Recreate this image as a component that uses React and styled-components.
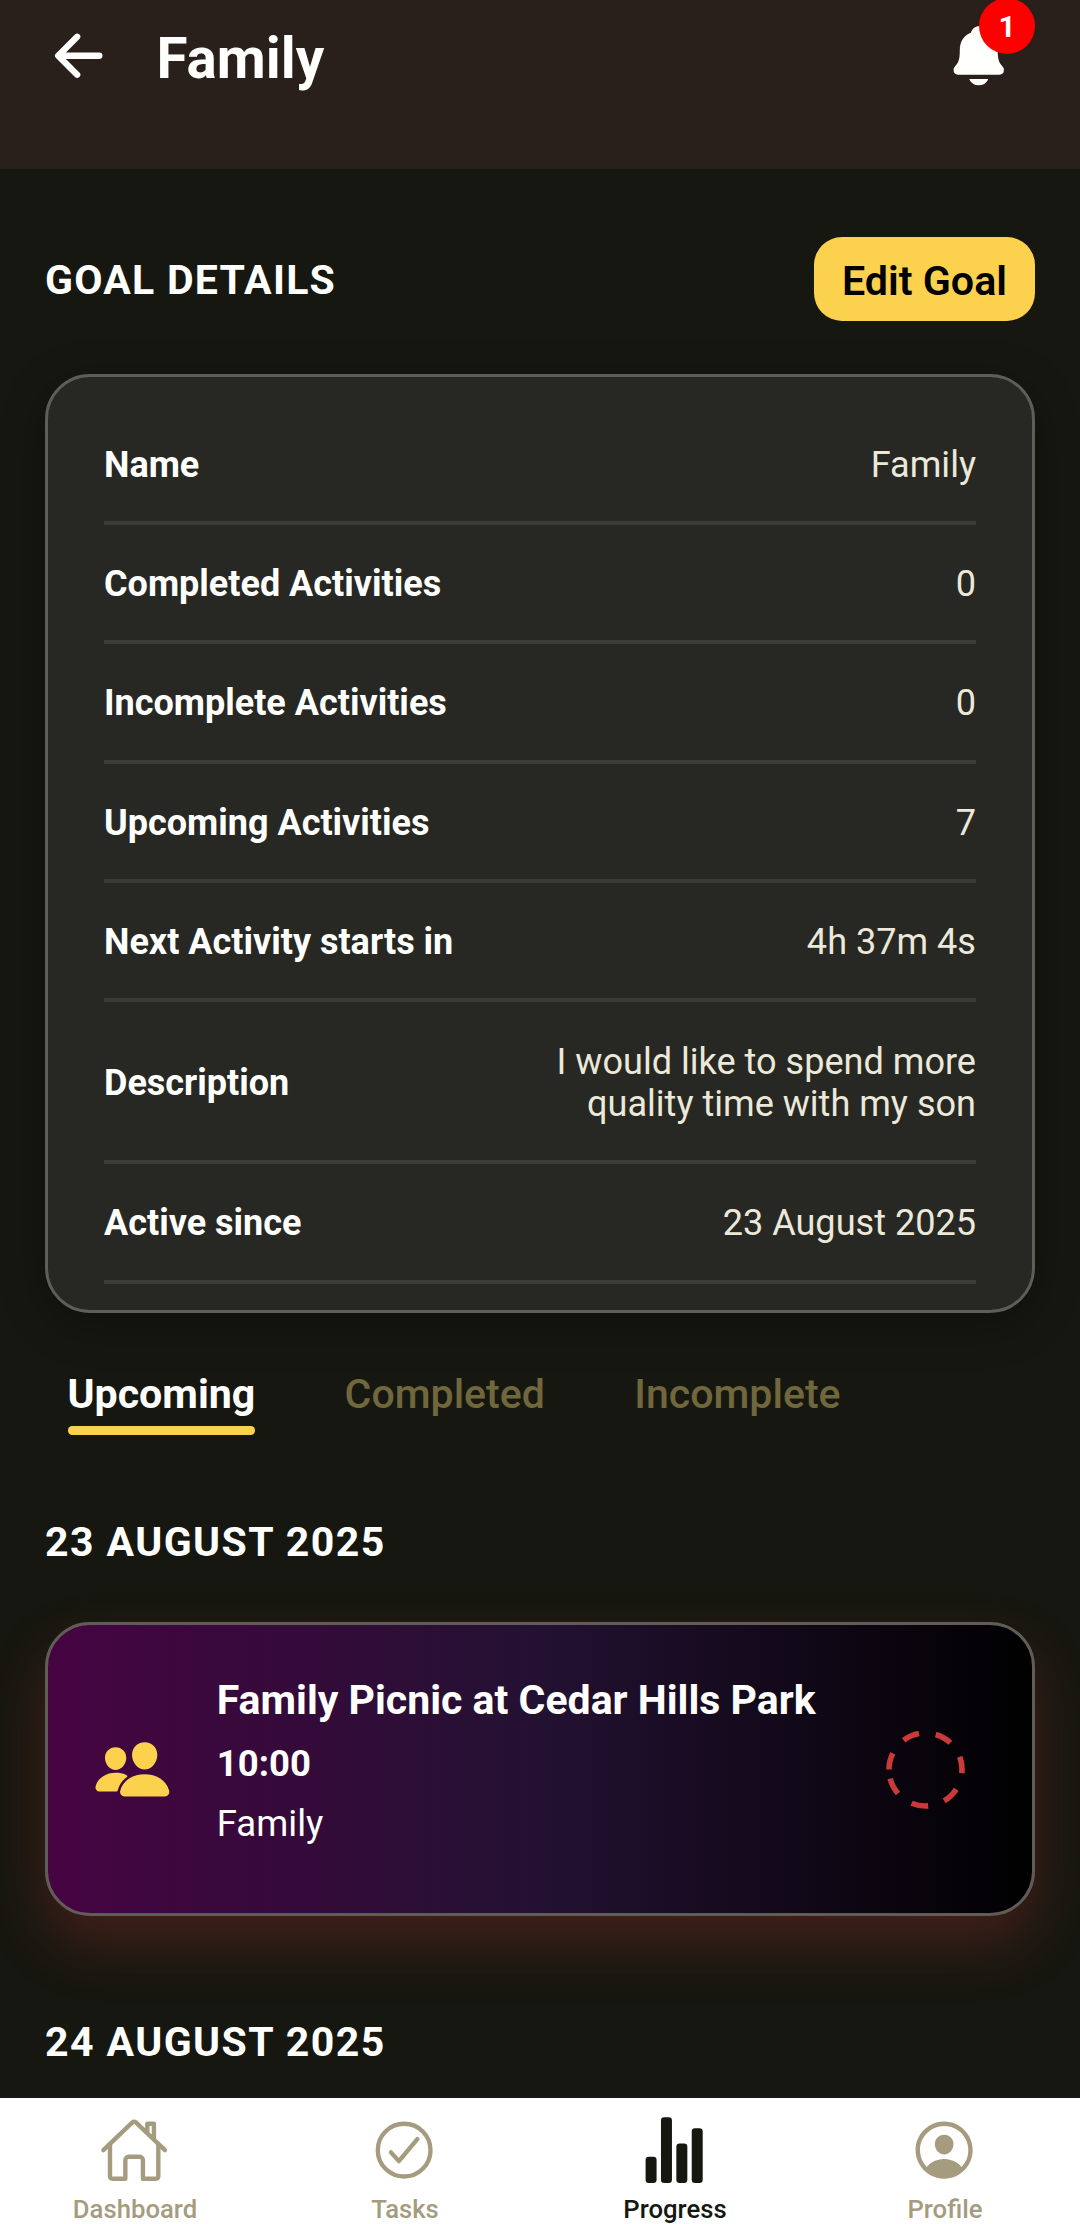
import React, { useState } from "react";
import styled, { createGlobalStyle, ThemeProvider } from "styled-components";
import {
  IoArrowBack,
  IoCheckmarkCircleOutline,
  IoHomeOutline,
  IoNotifications,
  IoPeople,
  IoPersonCircleOutline,
  IoStatsChart
} from "react-icons/io5";

const theme = {
  background: "#161710",
  header: "#2a201b",
  card: "#272823",
  cardBorder: "#5d5e58",
  divider: "#3b3c37",
  accent: "#fcd14d",
  text: "#fffffd",
  value: "#ece8da",
  tabIdle: "#70673d",
  danger: "#c93a38",
  navIdle: "#a59c80",
  navActive: "#161710"
};

const GlobalStyle = createGlobalStyle`
  * {
    box-sizing: border-box;
  }
  body {
    margin: 0;
    background: #161710;
    font-family: Roboto, "Liberation Sans", sans-serif;
  }
  button {
    background: none;
    border: 0;
    font: inherit;
    margin: 0;
    padding: 0;
  }
  svg {
    display: block;
    flex: none;
  }
`;

const Screen = styled.div`
  background: ${({ theme }) => theme.background};
  color: ${({ theme }) => theme.text};
  display: flex;
  flex-direction: column;
  height: 2224px;
  overflow: hidden;
  width: 1080px;
`;
const Header = styled.header`
  align-items: flex-start;
  background: ${({ theme }) => theme.header};
  display: flex;
  flex: none;
  height: 168.75px;
  padding: 22px 45px 0;
`;
const Back = styled.button`
  color: inherit;
  font-size: 67.5px;
`;
const Title = styled.h1`
  flex: 1;
  font-size: 56.5px;
  font-weight: 700;
  line-height: 66px;
  margin: 0 0 0 44px;
  padding-top: 4px;
`;
const Notifications = styled.button`
  color: inherit;
  font-size: 67.5px;
  margin-right: 22.5px;
  position: relative;
`;
const Badge = styled.span`
  background: #ff0000;
  border-radius: 50%;
  font-size: 30px;
  font-weight: 700;
  height: 56px;
  line-height: 57px;
  position: absolute;
  right: -22.5px;
  text-align: center;
  top: -24.5px;
  width: 56px;
`;
const Content = styled.main`
  flex: 1;
  min-height: 0;
  overflow: hidden;
  padding: 68.25px 45px 0;
`;
const Heading = styled.h2`
  font-size: 41px;
  font-weight: 700;
  letter-spacing: 1.45px;
  line-height: 50px;
  margin: 0;
  text-transform: uppercase;
`;
const SectionHeader = styled.div`
  align-items: center;
  display: flex;
  justify-content: space-between;
  margin-bottom: 53px;

  ${Heading} {
    letter-spacing: 1.25px;
    padding-top: 1px;
  }
`;
const EditButton = styled.button`
  background: ${({ theme }) => theme.accent};
  border-radius: 28px;
  color: #000;
  font-size: 41.2px;
  font-weight: 600;
  height: 84px;
  line-height: 50px;
  padding: 3px 28px 0;
`;
const Details = styled.dl`
  background: ${({ theme }) => theme.card};
  border: 3px solid ${({ theme }) => theme.cardBorder};
  border-radius: 45px;
  box-shadow: 0 11px 45px rgba(0, 0, 0, 0.3);
  margin: 0;
  padding: 28.5px 56px 26.5px;
`;
const Detail = styled.div`
  align-items: center;
  border-bottom: 4px solid ${({ theme }) => theme.divider};
  display: flex;
  font-size: 36px;
  justify-content: space-between;
  line-height: 42.4px;
  padding: 38.2px 0 34.8px;
`;
const Label = styled.dt`
  font-weight: 700;
`;
const Value = styled.dd`
  color: ${({ theme }) => theme.value};
  font-size: 36.1px;
  margin: 0;
  max-width: 436px;
  text-align: right;
`;
const Tabs = styled.nav`
  display: flex;
  gap: 89.3px;
  margin: 56px 22.5px 0;
`;
const Tab = styled.button`
  color: ${({ active, theme }) => (active ? theme.text : theme.tabIdle)};
  font-size: 41.1px;
  font-weight: ${({ active }) => (active ? 700 : 500)};
  line-height: 50px;

  &::after {
    background: ${({ active, theme }) =>
      active ? theme.accent : "transparent"};
    border-radius: 4.2px;
    content: "";
    display: block;
    height: 9px;
    margin-top: 7px;
  }
`;
const Day = styled.section`
  padding-top: ${({ first }) => (first ? "82px" : "101px")};
`;
const Event = styled.article`
  align-items: center;
  background: linear-gradient(90deg, #460442, #231132 50%, #000) border-box;
  border: 3px solid #625c58;
  border-radius: 45px;
  box-shadow: 0 28px 56px rgba(201, 58, 56, 0.25);
  display: flex;
  height: 294px;
  margin-top: 55px;
  padding: 0 67.5px 0 45px;

  > svg:first-child {
    color: ${({ theme }) => theme.accent};
    font-size: 78.75px;
  }
`;
const EventBody = styled.div`
  display: flex;
  flex: 1;
  flex-direction: column;
  font-size: 36.56px;
  gap: 17px;
  line-height: 43px;
  margin: 0 0 18px 45px;
`;
const EventTitle = styled.h3`
  font-size: 41px;
  font-weight: 700;
  line-height: 50px;
  margin: 0;
`;
const EventTime = styled.span`
  font-weight: 700;
`;
const BottomBar = styled.nav`
  background: #fff;
  display: flex;
  flex: none;
  height: 126px;
`;
const BottomItem = styled.button`
  align-items: center;
  color: ${({ active, theme }) => (active ? theme.navActive : theme.navIdle)};
  display: flex;
  flex: 1;
  flex-direction: column;
  font-size: 25.7px;
  font-weight: 500;
  line-height: 32px;
  padding-top: 17px;

  svg {
    font-size: 70.3px;
    margin: 0 1.4px 8px 0;
  }
`;

const DashedCircle = () => (
  <svg width="79" height="79" viewBox="0 0 79 79" fill="none">
    <path
      d="M3 39.5a36.5 36.5 0 0 1 73 0a36.5 36.5 0 0 1 -73 0"
      stroke={theme.danger}
      strokeDasharray="16.9"
      strokeWidth="5.6"
    />
  </svg>
);

const details = [
  ["Name", "Family"],
  ["Completed Activities", "0"],
  ["Incomplete Activities", "0"],
  ["Upcoming Activities", "7"],
  ["Next Activity starts in", "4h 37m 4s"],
  ["Description", "I would like to spend more quality time with my son"],
  ["Active since", "23 August 2025"]
];

const tabs = ["Upcoming", "Completed", "Incomplete"];

const days = [
  {
    date: "23 August 2025",
    events: [
      {
        title: "Family Picnic at Cedar Hills Park",
        time: "10:00",
        goal: "Family"
      }
    ]
  },
  { date: "24 August 2025", events: [] }
];

const bottomItems = [
  { name: "Dashboard", icon: IoHomeOutline },
  { name: "Tasks", icon: IoCheckmarkCircleOutline },
  { name: "Progress", icon: IoStatsChart },
  { name: "Profile", icon: IoPersonCircleOutline }
];

const App = () => {
  const [tab, setTab] = useState("Upcoming");
  return (
    <ThemeProvider theme={theme}>
      <GlobalStyle />
      <Screen>
        <Header>
          <Back aria-label="Back">
            <IoArrowBack />
          </Back>
          <Title>Family</Title>
          <Notifications aria-label="Notifications">
            <IoNotifications />
            <Badge>1</Badge>
          </Notifications>
        </Header>
        <Content>
          <SectionHeader>
            <Heading>Goal Details</Heading>
            <EditButton>Edit Goal</EditButton>
          </SectionHeader>
          <Details>
            {details.map(([label, value]) => (
              <Detail key={label}>
                <Label>{label}</Label>
                <Value>{value}</Value>
              </Detail>
            ))}
          </Details>
          <Tabs>
            {tabs.map(name => (
              <Tab key={name} active={name === tab} onClick={() => setTab(name)}>
                {name}
              </Tab>
            ))}
          </Tabs>
          {days.map(({ date, events }, i) => (
            <Day key={date} first={i === 0}>
              <Heading>{date}</Heading>
              {events.map(({ title, time, goal }) => (
                <Event key={title}>
                  <IoPeople />
                  <EventBody>
                    <EventTitle>{title}</EventTitle>
                    <EventTime>{time}</EventTime>
                    <span>{goal}</span>
                  </EventBody>
                  <DashedCircle />
                </Event>
              ))}
            </Day>
          ))}
        </Content>
        <BottomBar>
          {bottomItems.map(({ name, icon: Icon }) => (
            <BottomItem key={name} active={name === "Progress"}>
              <Icon />
              {name}
            </BottomItem>
          ))}
        </BottomBar>
      </Screen>
    </ThemeProvider>
  );
};

export default App;
